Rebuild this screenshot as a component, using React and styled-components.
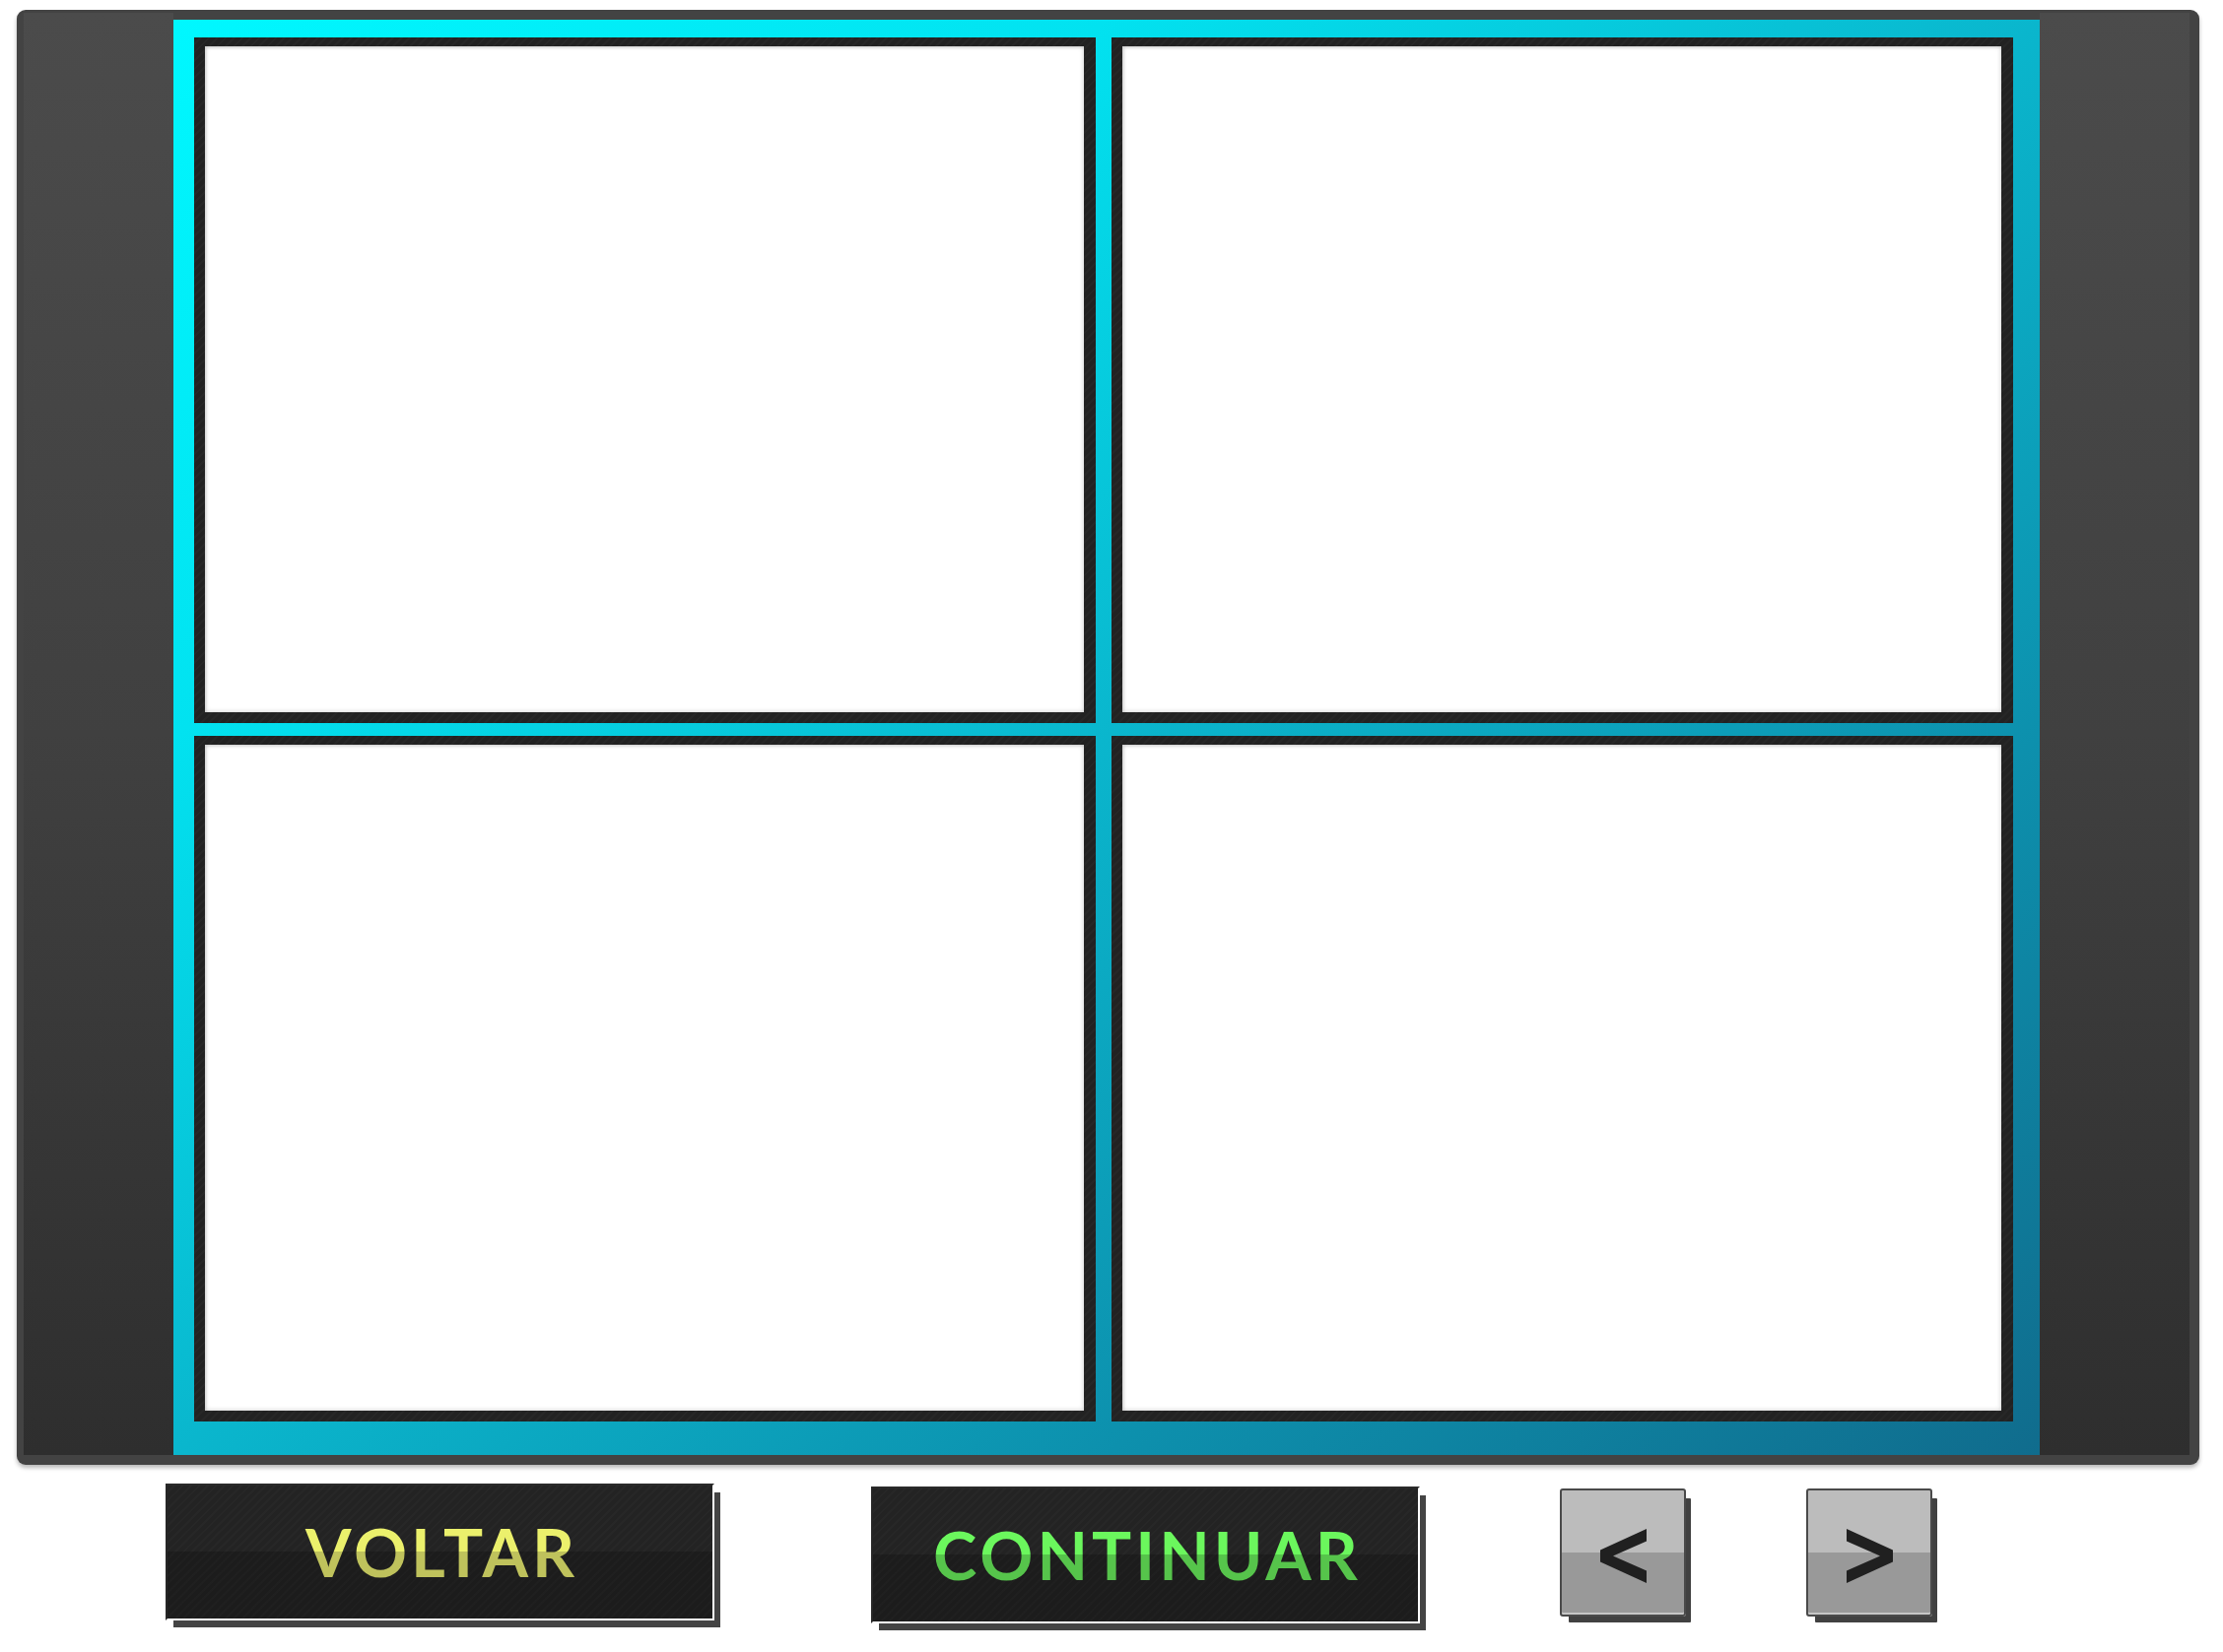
import React from "react";
import styled, { createGlobalStyle } from "styled-components";

const GlobalStyle = createGlobalStyle`
  html, body { margin: 0; padding: 0; background: #ffffff; }
  body { font-family: Lato, "Open Sans", sans-serif; }
`;

const stripes = (base, line) =>
  `repeating-linear-gradient(135deg, ${base} 0px, ${base} 4px, ${line} 4px, ${line} 6px)`;

const Page = styled.div`
  padding: 10px 0 0 17px;
  width: 2239px;
  height: 1667px;
  box-sizing: border-box;
`;

const Frame = styled.div`
  display: grid;
  grid-template-columns: 152px 1894px 152px;
  width: 2215px;
  box-sizing: border-box;
  padding: 3px 10px 10px 7px;
  background: #434343;
  border-radius: 9px;
  box-shadow: 0 3px 4px rgba(0, 0, 0, 0.28);
`;

const SidePanel = styled.div`
  background: linear-gradient(to bottom, #4b4b4b 0%, #404040 50%, #2e2e2e 100%);
`;

const Stage = styled.div`
  margin-top: 7px;
  height: 1457px;
  box-sizing: border-box;
  padding: 18px 27px 34px 21px;
  display: grid;
  grid-template-columns: 915px 915px;
  grid-template-rows: 696px 696px;
  column-gap: 16px;
  row-gap: 13px;
  background: linear-gradient(
    to bottom right,
    #00f8ff 0%,
    #02e2f0 25%,
    #0ab6cd 50%,
    #0d90ad 75%,
    #106c8d 100%
  );
`;

const Panel = styled.div`
  box-sizing: border-box;
  padding: 9px 12px 11px 11px;
  background: ${stripes("#222222", "#272727")};
  display: flex;
`;

const PanelFace = styled.div`
  flex: 1;
  background: #ffffff;
  box-shadow: inset 0 0 5px rgba(0, 0, 0, 0.22), inset 2px 2px 2px rgba(0, 0, 0, 0.06);
`;

const ButtonRow = styled.div`
  display: flex;
  align-items: flex-start;
  padding-left: 151px;
  margin-top: 19px;
`;

const LabelButton = styled.button`
  margin: ${(p) => p.$top}px 0 0 ${(p) => p.$left}px;
  width: 557px;
  height: 139px;
  padding: 0;
  box-sizing: border-box;
  border: 2px solid #ffffff;
  border-top-color: #2a2a2a;
  border-left-color: #262626;
  background: linear-gradient(to bottom, transparent 50%, rgba(0, 0, 0, 0.2) 50%),
    ${stripes("#232323", "#272727")};
  box-shadow: 7px 8px 0 -1px #444444;
  cursor: pointer;
  font-family: Lato, "Open Sans", sans-serif;
`;

const Label = styled.span`
  display: block;
  font-size: 67px;
  font-weight: 700;
  letter-spacing: 4px;
  line-height: 135px;
  text-align: center;
  padding-left: 4px;
  background: linear-gradient(to bottom, ${(p) => p.$c1} 50%, ${(p) => p.$c2} 50%);
  -webkit-background-clip: text;
  background-clip: text;
  color: transparent;
`;

const ArrowButton = styled.button`
  margin: 5px 0 0 ${(p) => p.$left}px;
  width: 128px;
  height: 130px;
  padding: 0;
  box-sizing: border-box;
  border: 2px solid #4a4a4a;
  border-radius: 3px;
  background: linear-gradient(to bottom, #bcbcbc 50%, #999999 50%);
  box-shadow: inset 0 -2px 0 #c6c6c6, 7px 8px 0 -2px #414141;
  display: flex;
  align-items: center;
  justify-content: center;
  cursor: pointer;
`;

const Chevron = ({ dir }) => (
  <svg
    width="47"
    height="55"
    viewBox="0 0 47 55"
    style={{ transform: dir === "right" ? "scaleX(-1)" : "none", marginTop: 6 }}
  >
    <polygon points="47,0 47,12.5 13,27.5 47,42.5 47,55 0,33.5 0,21.5" fill="#202020" />
  </svg>
);

export default function App() {
  return (
    <>
      <GlobalStyle />
      <Page>
        <Frame>
          <SidePanel />
          <Stage>
            <Panel>
              <PanelFace />
            </Panel>
            <Panel>
              <PanelFace />
            </Panel>
            <Panel>
              <PanelFace />
            </Panel>
            <Panel>
              <PanelFace />
            </Panel>
          </Stage>
          <SidePanel />
        </Frame>
        <ButtonRow>
          <LabelButton $top={0} $left={0}>
            <Label $c1="#ebf06c" $c2="#bfc25c">
              VOLTAR
            </Label>
          </LabelButton>
          <LabelButton $top={3} $left={159}>
            <Label $c1="#6bf75d" $c2="#56c44b">
              CONTINUAR
            </Label>
          </LabelButton>
          <ArrowButton $left={142} aria-label="anterior">
            <Chevron dir="left" />
          </ArrowButton>
          <ArrowButton $left={122} aria-label="próximo">
            <Chevron dir="right" />
          </ArrowButton>
        </ButtonRow>
      </Page>
    </>
  );
}
